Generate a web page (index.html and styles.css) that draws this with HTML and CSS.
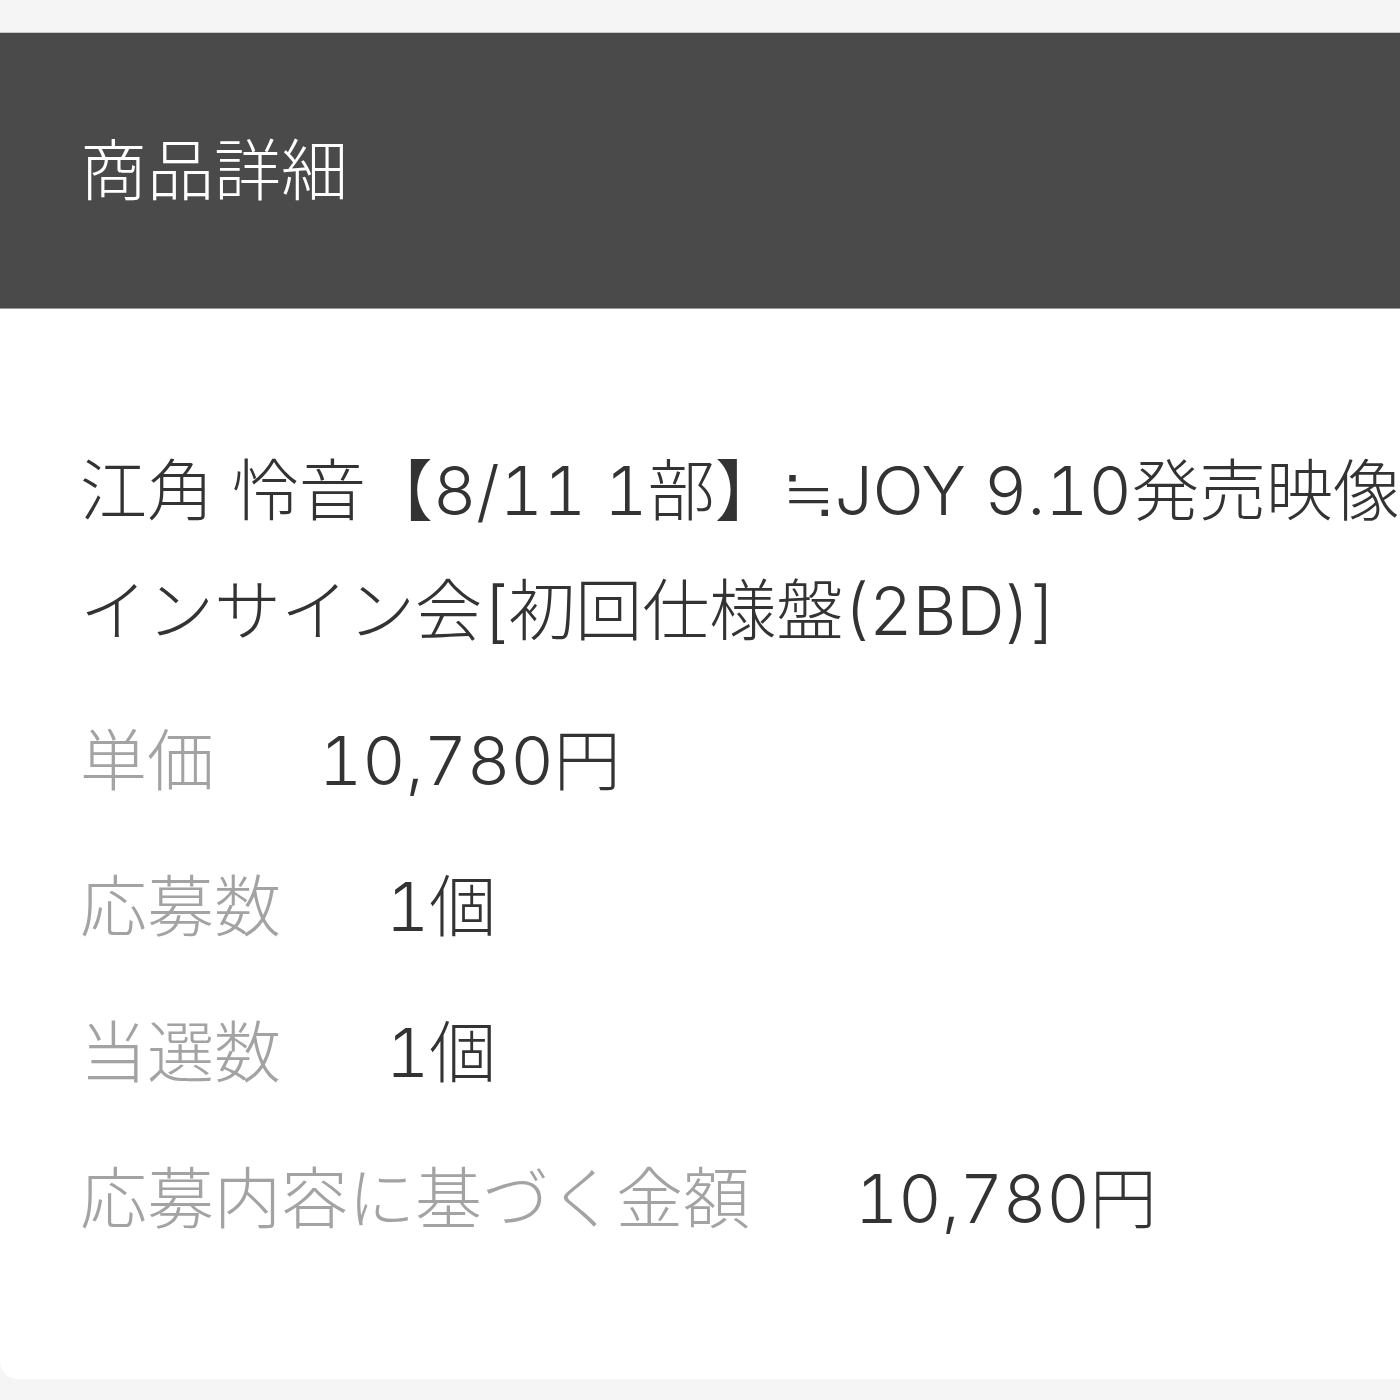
FILE: index.html
```html
<!DOCTYPE html>
<html lang="ja">
  <head>
    <meta charset="UTF-8" />
    <meta name="viewport" content="width=device-width, initial-scale=1.0" />
    <title>商品詳細</title>
    <link rel="stylesheet" href="styles.css">
  </head>
  <body>
    <div class="detail-card">
      <div class="detail-header">
        <h2>商品詳細</h2>
      </div>
      <div class="detail-body">
        <p class="item-name">
          <span class="name-line">江角 怜音【8/11 1部】≒JOY 9.10発売映像作品 オンラ</span>
          <span class="name-line">インサイン会[初回仕様盤(2BD)]</span>
        </p>
        <div class="detail-row">
          <span class="row-label">単価</span>
          <span class="row-value">10,780円</span>
        </div>
        <div class="detail-row">
          <span class="row-label">応募数</span>
          <span class="row-value">1個</span>
        </div>
        <div class="detail-row">
          <span class="row-label">当選数</span>
          <span class="row-value">1個</span>
        </div>
        <div class="detail-row">
          <span class="row-label">応募内容に基づく金額</span>
          <span class="row-value">10,780円</span>
        </div>
      </div>
    </div>
  </body>
</html>
```

FILE: styles.css
```css
html,
body {
  margin: 0;
  padding: 0;
  background-color: #f5f5f5;
  overflow: hidden;
}
body {
  font-family: Inter, "Noto Sans CJK JP", sans-serif;
  font-weight: 300;
  font-variant-numeric: tabular-nums;
  padding-top: 32px;
}
.detail-card {
  width: 1440px;
  background-color: #fff;
  border-top: 1px solid #c8c8c8;
  border-radius: 0 0 18px 18px;
  overflow: hidden;
}
.detail-header {
  background-color: #4a4a4a;
  height: 275px;
  padding: 0 80px;
  display: flex;
  align-items: center;
  border-bottom: 1px solid #9a9a9a;
}
.detail-header h2 {
  margin: 0;
  color: #fff;
  font-size: 67px;
  font-weight: 300;
  line-height: 1;
}
.detail-body {
  padding: 122px 80px 120px;
}
.item-name {
  margin: 0;
  color: #333;
  font-size: 67px;
  line-height: 120px;
}
.name-line {
  display: block;
  white-space: nowrap;
}
.detail-row {
  display: flex;
  gap: 105px;
  font-size: 67px;
  line-height: 120px;
  margin-top: 26px;
}
.detail-row:first-of-type {
  margin-top: 30px;
}
.row-label {
  color: #a3a3a3;
}
.row-value {
  color: #333;
}
```
